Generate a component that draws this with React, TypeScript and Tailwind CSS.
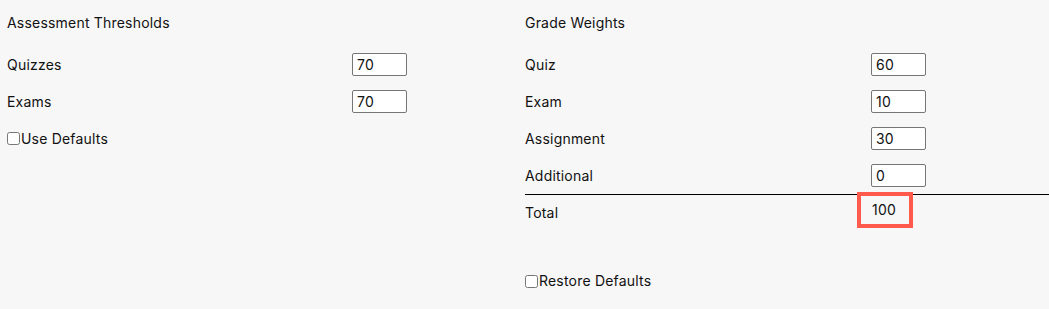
import { useState } from "react"

type Field = { label: string; value: string }

function FieldRow({ label, value, onChange }: { label: string; value: string; onChange: (v: string) => void }) {
  return (
    <div className="flex h-[37px] items-center justify-between">
      <span className="leading-[20px]">{label}</span>
      <input
        type="text"
        value={value}
        onChange={(e) => onChange(e.target.value)}
        className="h-[23px] w-[55px] rounded-[2px] border border-[#767676] bg-white px-[4px] text-[14px] leading-[20px] tracking-[0.2px] text-[#111] outline-none"
      />
    </div>
  )
}

export default function App() {
  const [thresholds, setThresholds] = useState<Field[]>([
    { label: "Quizzes", value: "70" },
    { label: "Exams", value: "70" },
  ])
  const [weights, setWeights] = useState<Field[]>([
    { label: "Quiz", value: "60" },
    { label: "Exam", value: "10" },
    { label: "Assignment", value: "30" },
    { label: "Additional", value: "0" },
  ])

  const total = weights.reduce((sum, w) => sum + (parseFloat(w.value) || 0), 0)

  const update = (list: Field[], i: number, v: string) => list.map((f, j) => (j === i ? { ...f, value: v } : f))

  return (
    <div
      className="grid h-[309px] grid-cols-[518px_1fr] bg-[#f7f7f7] pl-[7px] text-[14px] tracking-[0.2px] text-[#111]"
      style={{ fontFamily: "Inter, 'Liberation Sans', sans-serif" }}
    >
      {/* thresholds */}
      <div className="w-[400px]">
        <h3 className="mb-[13px] mt-[13px] leading-[20px]">Assessment Thresholds</h3>
        {thresholds.map((f, i) => (
          <FieldRow key={f.label} label={f.label} value={f.value} onChange={(v) => setThresholds(update(thresholds, i, v))} />
        ))}
        <label className="flex h-[37px] items-center leading-[20px]">
          <input type="checkbox" className="m-0 mr-[1px] h-[13px] w-[13px]" />
          Use Defaults
        </label>
      </div>

      {/* weights */}
      <div>
        <h3 className="mb-[13px] mt-[13px] leading-[20px]">Grade Weights</h3>
        <div className="w-[401px]">
          {weights.map((f, i) => (
            <FieldRow key={f.label} label={f.label} value={f.value} onChange={(v) => setWeights(update(weights, i, v))} />
          ))}
        </div>
        <div className="border-t border-black">
          <div className="flex h-[36px] w-[401px] items-start justify-between">
            <span className="mt-[8px] leading-[20px]">Total</span>
            <div className="mr-[17px] mt-[1px] h-[28px] w-[48px] pl-[11px] leading-[28px] outline outline-4 outline-[#ff5a4c]">
              {total}
            </div>
          </div>
        </div>
        <label className="mt-[40px] flex h-[20px] items-center leading-[20px]">
          <input type="checkbox" className="m-0 mr-[1px] h-[13px] w-[13px]" />
          Restore Defaults
        </label>
      </div>
    </div>
  )
}
